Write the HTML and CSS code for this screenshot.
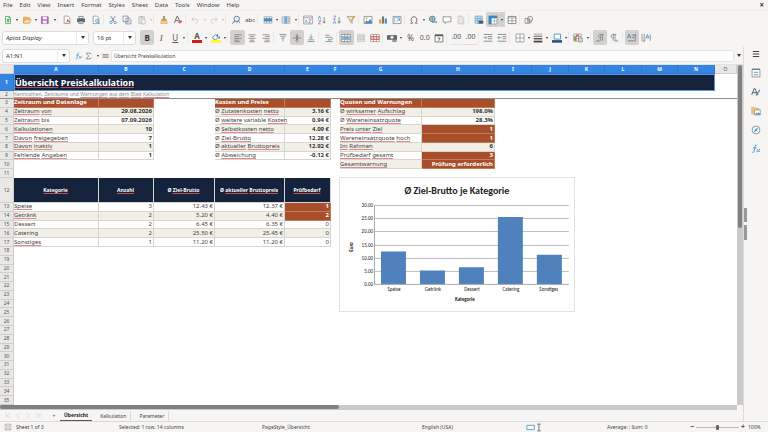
FILE: index.html
```html
<!DOCTYPE html>
<html lang="de">
<head>
<meta charset="utf-8">
<title>Übersicht Preiskalkulation</title>
<link rel="stylesheet" href="styles.css">
</head>
<body>
<svg class="sprite" aria-hidden="true">
  <symbol id="i-new" viewBox="0 0 14 14"><path d="M3.500 2h5l2 2v8h-7z" fill="#fff" stroke="#3f9a58"/><path d="M5 6.500h4.500M5 8.500h4.500M7 5v6" stroke="#34a853" stroke-width="1.200"/><path d="M8 1.500l3 3H8z" fill="#3f9a58"/></symbol>
  <symbol id="i-open" viewBox="0 0 14 14"><path d="M2 3h4l1 1h4v7H2z" fill="#e9b064" stroke="#d99a45"/><path d="M2 11.500l2-5h9l-2 5z" fill="#fbdca6" stroke="#d99a45" stroke-width=".8"/></symbol>
  <symbol id="i-save" viewBox="0 0 14 14"><path d="M2 2.500h9.500v9.500H2z" fill="#b86fc6" stroke="#9c4fae"/><path d="M4 2.500h5.500v3.500H4z" fill="#fff"/><path d="M4 8h5.500v4H4z" fill="#f4e4f7"/></symbol>
  <symbol id="i-pdf" viewBox="0 0 14 14"><path d="M3 1.500h5.500l2.500 2.500v8H3z" fill="#fff" stroke="#888"/><path d="M6 10.500c3-2 3-4 2-4s0 3 3.500 3.500" fill="none" stroke="#d84646" stroke-width="1.400"/></symbol>
  <symbol id="i-print" viewBox="0 0 14 14"><path d="M4 2h6v3H4z" fill="#fff" stroke="#666"/><path d="M1.500 5h11v5h-11z" fill="#59636b"/><path d="M4 8.500h6v3.500H4z" fill="#9dc7e4" stroke="#59636b" stroke-width=".7"/></symbol>
  <symbol id="i-preview" viewBox="0 0 14 14"><path d="M3 1.500h5.500l2.500 2.500v8H3z" fill="#fff" stroke="#888"/><circle cx="8.500" cy="8" r="2.200" fill="#d9effa" stroke="#3a8fc4"/><path d="M10 10l2 2.500" stroke="#3a8fc4"/></symbol>
  <symbol id="i-cut" viewBox="0 0 14 14"><path d="M4 1.500l5 8M10 1.500l-5 8" stroke="#666" fill="none"/><circle cx="4" cy="10.500" r="1.700" fill="none" stroke="#3a8fc4"/><circle cx="10" cy="10.500" r="1.700" fill="none" stroke="#3a8fc4"/></symbol>
  <symbol id="i-copy" viewBox="0 0 14 14"><path d="M1.500 1.500h7v8h-7zM5.500 4.500h4.500l2.500 2v6h-7z" fill="#f8fbfd" stroke="#778"/><path d="M7 8h4M7 10h4" stroke="#5aa5d3" stroke-width=".8"/></symbol>
  <symbol id="i-paste" viewBox="0 0 14 14"><path d="M2.500 2.500h8v9.500h-8z" fill="#e2e1df" stroke="#bbb"/><path d="M5 1.500h3v2H5z" fill="#aaa"/><path d="M6.500 6h5v6.500h-5z" fill="#f5f5f5" stroke="#bbb"/></symbol>
  <symbol id="i-clone" viewBox="0 0 14 14"><path d="M6 1.500h2v4H6z" fill="#777"/><path d="M3.500 5.500h7v2.500h-7z" fill="#d98b3a"/><path d="M3 8h8l.5 4h-9z" fill="#f4c98d" stroke="#c98b45" stroke-width=".6"/></symbol>
  <symbol id="i-clear" viewBox="0 0 14 14"><path d="M2 11L5.500 2h1L10 11M3.500 8h4.500" fill="none" stroke="#555" stroke-width="1.200"/><path d="M7 10l4-3 2 2-3.500 3z" fill="#e0565b"/></symbol>
  <symbol id="i-undo" viewBox="0 0 14 14"><path d="M5.500 3L2.500 6l3 3M3 6h6c3 0 3 5-1 6" fill="none" stroke="#c4c3c1" stroke-width="1.100"/></symbol>
  <symbol id="i-redo" viewBox="0 0 14 14"><path d="M8.500 3l3 3-3 3M11 6H5c-3 0-3 5 1 6" fill="none" stroke="#c4c3c1" stroke-width="1.100"/></symbol>
  <symbol id="i-find" viewBox="0 0 14 14"><circle cx="8" cy="5.500" r="3.800" fill="#e5f2fa" stroke="#555"/><path d="M5.500 8L2 12" stroke="#555" stroke-width="1.300"/><path d="M8 11.500l2-4 2.500 4" fill="none" stroke="#3a8fc4"/></symbol>
  <symbol id="i-row" viewBox="0 0 14 14"><path d="M1.500 2.500h11v9h-11zM1.500 9h11M5 2.500v9M9 2.500v9" fill="#fff" stroke="#888" stroke-width=".8"/><path d="M1.500 4.500h11v4h-11z" fill="#3a8fc4"/></symbol>
  <symbol id="i-col" viewBox="0 0 14 14"><path d="M1.500 2.500h11v9h-11zM1.500 5.500h11M1.500 8.500h11M10 2.500v9" fill="#fff" stroke="#888" stroke-width=".8"/><path d="M4.500 2h4v10h-4z" fill="#6ab0dc"/></symbol>
  <symbol id="i-sort" viewBox="0 0 14 14"><path d="M1 1.500h12v11H1zM1 4h12" fill="#fff" stroke="#777" stroke-width=".9"/><path d="M3 11l1.500-4L6 11" fill="none" stroke="#3a8fc4"/><path d="M8 6.500h3l-3 4.500h3" fill="none" stroke="#9b59b6"/></symbol>
  <symbol id="i-asc" viewBox="0 0 14 14"><path d="M1.500 6L3.500 1.500 5.500 6" fill="none" stroke="#3a8fc4"/><path d="M2 8h3.500L2 12.500h3.500" fill="none" stroke="#b05fb8"/><path d="M10 3v8M8 9l2 2.500L12 9" fill="none" stroke="#666"/></symbol>
  <symbol id="i-desc" viewBox="0 0 14 14"><path d="M1.500 12.500L3.500 8l2 4.500" fill="none" stroke="#3a8fc4"/><path d="M2 1.500h3.500L2 6h3.500" fill="none" stroke="#b05fb8"/><path d="M10 3v8M8 9l2 2.500L12 9" fill="none" stroke="#666"/></symbol>
  <symbol id="i-filter" viewBox="0 0 14 14"><path d="M1.500 2h11L8.500 7v5L5.500 9V7z" fill="#f9e7cb" stroke="#888"/><path d="M11 3L7 9" stroke="#e59c38" stroke-width="1.800"/></symbol>
  <symbol id="i-image" viewBox="0 0 14 14"><path d="M1.500 2h11v10h-11z" fill="#fff" stroke="#777"/><path d="M2 11.500l3-4 2 2 3-3.500 2.500 3v2.500z" fill="#3a8fc4"/><circle cx="5" cy="4.500" r="1.200" fill="#e8a33d"/></symbol>
  <symbol id="i-chart" viewBox="0 0 14 14"><path d="M1.500 6h3v6h-3z" fill="#e8a33d"/><path d="M5.500 2h3v10h-3z" fill="#777"/><path d="M9.500 5h3v7h-3z" fill="#3a8fc4"/></symbol>
  <symbol id="i-pivot" viewBox="0 0 14 14"><path d="M1.500 2h11v10h-11z" fill="#fff" stroke="#777"/><path d="M2 2.500h10v2H2zM2 2.500h2v9H2z" fill="#9ccbe8"/><path d="M6 9.500l4-3.500M8 5.500h2.500V8" fill="none" stroke="#2f86bd"/></symbol>
  <symbol id="i-omega" viewBox="0 0 14 14"><path d="M2 11.500h3.200C1.500 8 2.500 2.500 7 2.500S12.500 8 8.800 11.500H12" fill="none" stroke="#555" stroke-width="1.100"/></symbol>
  <symbol id="i-link" viewBox="0 0 14 14"><circle cx="6" cy="5.500" r="4" fill="#a9d0e8" stroke="#666"/><path d="M2 5.500h8M6 1.500v8" stroke="#666" stroke-width=".7"/><path d="M6 10h3M9.500 10h3" stroke="#3a8fc4" stroke-width="2"/></symbol>
  <symbol id="i-comment" viewBox="0 0 14 14"><path d="M1.500 2.500h11v7H7L4.500 12V9.500h-3z" fill="#fff" stroke="#777"/></symbol>
  <symbol id="i-header" viewBox="0 0 14 14"><path d="M3 1.500h5.500l2.500 2.500v8.500H3z" fill="#e6e5e3" stroke="#c2c1bf"/></symbol>
  <symbol id="i-area" viewBox="0 0 14 14"><path d="M1.500 1.500h10v10h-10zM1.500 5h10M1.500 8h10M5 1.500v10M8.500 1.500v10" fill="#d4eaf7" stroke="#4a94c1" stroke-width=".8"/><path d="M6.500 8h6.500v4H6.500z" fill="#555"/></symbol>
  <symbol id="i-freeze" viewBox="0 0 14 14"><path d="M1.500 1.500h11v11h-11z" fill="#fff" stroke="#888" stroke-width=".8"/><path d="M1 1h12v3.500H5v8.500H1z" fill="#3187c2"/><path d="M5 8.500h8M9 4v9" stroke="#999" stroke-width=".8"/></symbol>
  <symbol id="i-split" viewBox="0 0 14 14"><path d="M1.500 2h11v10h-11z" fill="#fff" stroke="#666"/><path d="M1.500 4h11M7 4v8M1.500 8h11" stroke="#666" stroke-width=".8"/></symbol>
  <symbol id="i-shapes" viewBox="0 0 14 14"><path d="M1.500 5h6v6.500h-6z" fill="none" stroke="#777"/><circle cx="8.500" cy="5.500" r="3.600" fill="none" stroke="#777"/><path d="M5 7h5v4H5z" fill="none" stroke="#777" stroke-width=".7"/></symbol>
  <symbol id="i-fill" viewBox="0 0 14 14"><path d="M2 6l4-4 4.500 4L6.500 9.500 4 9z" fill="#e8f3fa" stroke="#666"/><path d="M9 1.500v4M11.500 4.500v4" stroke="#3a8fc4" stroke-width="1.500"/><path d="M0 10h14v3.500H0z" fill="#ff0"/></symbol>
  <symbol id="i-left" viewBox="0 0 14 14"><path d="M2 2.500h10M2 5h6M2 7.500h10M2 10h6M2 12.200h8" stroke="#666" stroke-width=".9"/></symbol>
  <symbol id="i-center" viewBox="0 0 14 14"><path d="M2 2.500h10M4 5h6M2 7.500h10M4 10h6M3 12.200h8" stroke="#666" stroke-width=".9"/></symbol>
  <symbol id="i-right" viewBox="0 0 14 14"><path d="M2 2.500h10M6 5h6M2 7.500h10M6 10h6M4 12.200h8" stroke="#666" stroke-width=".9"/></symbol>
  <symbol id="i-top" viewBox="0 0 14 14"><path d="M2 2h10M3 4.500h8" stroke="#777"/><path d="M7 12V6.500M4.800 8.500L7 6.200l2.200 2.300" fill="none" stroke="#3a8fc4"/></symbol>
  <symbol id="i-middle" viewBox="0 0 14 14"><path d="M1 7h12" stroke="#666"/><path d="M7 1v12M5 3.500l2 2 2-2M5 10.500l2-2 2 2" fill="none" stroke="#666"/></symbol>
  <symbol id="i-bottom" viewBox="0 0 14 14"><path d="M2 12h10M3 9.500h8" stroke="#777"/><path d="M7 2v5.500M4.800 5.500L7 7.800l2.200-2.300" fill="none" stroke="#3a8fc4"/></symbol>
  <symbol id="i-wrap" viewBox="0 0 14 14"><path d="M2 3h6M2 6h9M2 12h10" stroke="#777"/><path d="M11 6c2 1 1 3.500-1 3.500H6M7.500 8L6 9.500 7.500 11" fill="none" stroke="#3a8fc4"/></symbol>
  <symbol id="i-merge" viewBox="0 0 14 14"><path d="M1 2h12v10H1zM1 5h12M1 9h12M5 2v3M9 2v3M5 9v3M9 9v3" fill="#fff" stroke="#666" stroke-width=".8"/><path d="M1.500 5h11v4h-11z" fill="#8fc6e8"/><path d="M3 7h8" stroke="#2a7db5"/></symbol>
  <symbol id="i-unmerge" viewBox="0 0 14 14"><path d="M2 2h10v10H2zM2 5h10M2 9h10" fill="#ddd" stroke="#bbb" stroke-width=".8"/></symbol>
  <symbol id="i-split-cells" viewBox="0 0 14 14"><path d="M1 2h12v10H1zM1 5h12M1 9h12M5 2v10M9 2v10" fill="#fff" stroke="#777" stroke-width=".8"/><path d="M1.500 5h11v4h-11zM5 5v4M9 5v4" fill="#f8d8d8" stroke="#d84646"/></symbol>
  <symbol id="i-money" viewBox="0 0 14 14"><path d="M0 3h14v6.500H0z" fill="#666"/><circle cx="7" cy="6" r="2.200" fill="#eee"/><path d="M8 9h5v3H8z" fill="#999" stroke="#555" stroke-width=".6"/></symbol>
  <symbol id="i-date" viewBox="0 0 14 14"><path d="M1.500 2.500h11v10h-11z" fill="#fff" stroke="#555"/><path d="M1.500 3.500h11" stroke="#555" stroke-width="2"/><path d="M5 7h3.500L6.500 11" fill="none" stroke="#444"/></symbol>
  <symbol id="i-indent" viewBox="0 0 14 14"><path d="M1 2h12M7 5h6M7 8h6M1 11.500h12" stroke="#666"/><path d="M.5 6.500H5M3.500 4.500l2 2-2 2" fill="none" stroke="#3a8fc4"/></symbol>
  <symbol id="i-outdent" viewBox="0 0 14 14"><path d="M1 2h12M8 5h5M8 8h5M1 11.500h12" stroke="#666"/><path d="M1 6.500h5.500M3 4.500l-2 2 2 2" fill="none" stroke="#3a8fc4"/></symbol>
  <symbol id="i-border" viewBox="0 0 14 14"><path d="M1.500 1.500h11v11h-11zM7 1.500v11M1.500 7h11" fill="#fff" stroke="#777" stroke-width=".9"/></symbol>
  <symbol id="i-style" viewBox="0 0 14 14"><path d="M1 1.500h12" stroke="#777" stroke-width=".8"/><path d="M1 4.500h12" stroke="#666" stroke-width="1.500"/><path d="M1 8h12" stroke="#555" stroke-width="2"/><path d="M1 12h12" stroke="#444" stroke-width="2.500"/></symbol>
  <symbol id="i-bcolor" viewBox="0 0 14 14"><path d="M3 1.500h9v7H3z" fill="#fff" stroke="#3a8fc4" stroke-width="1.200"/><path d="M0 10h14v3.500H0z" fill="#1f4e79"/></symbol>
  <symbol id="i-cond" viewBox="0 0 14 14"><path d="M1 1.500h10.500v10H1zM1 5h10.500M1 8h10.500M4.500 1.500v10M8 1.500v10" fill="#fff" stroke="#777" stroke-width=".8"/><path d="M4.500 2h3.500v3H4.500zM1.500 8h3v3h-3z" fill="#d9655a"/><path d="M1.500 5h3v3h-3z" fill="#67a866"/><path d="M8 7h5v5.500H8z" fill="#e9e2cf" stroke="#666" stroke-width=".8"/></symbol>
  <symbol id="i-ltr" viewBox="0 0 14 14"><path d="M12 2H7.500C4 2 4 7 7.500 7M8 2v9M10.500 2v9" fill="none" stroke="#777"/><path d="M1 11h5M4.500 9.500l1.500 1.500-1.500 1.500" fill="none" stroke="#3a8fc4"/></symbol>
  <symbol id="i-rtl" viewBox="0 0 14 14"><path d="M10 2H5.500C2 2 2 7 5.500 7M6 2v9M8.500 2v9" fill="none" stroke="#777"/><path d="M13 11H9M10.500 9.500L9 11l1.500 1.500" fill="none" stroke="#3a8fc4"/></symbol>
  <symbol id="i-horiz" viewBox="0 0 14 14"><path d="M.5 7.500l2.500-6 2.500 6M1.500 5.500h3" fill="none" stroke="#3a8fc4" stroke-width="1.100"/><path d="M7 3h3M7 6.500h3M1 11h9M11.500 2v10M10.500 3.500l1-1.500 1 1.500" fill="none" stroke="#666"/></symbol>
  <symbol id="i-vert" viewBox="0 0 14 14"><path d="M6.500 8l2.500-6 2.500 6M7.500 6h3" fill="none" stroke="#3a8fc4" stroke-width="1.100"/><path d="M1.500 1v11M4.500 1v11M3.500 10.500l1 1.500 1-1.500M13 2v9" fill="none" stroke="#777"/></symbol>
  <symbol id="i-fx" viewBox="0 0 14 14"><path d="M8 1.500C5.500 1 5.500 4 5 7s-.8 5.500-3 5M3 5.500h4.500M8 7.500c2-1 1.500 4 4.500 3M12.500 7.500c-2 0-2.500 3.500-5 3.500" fill="none" stroke="#2f8fd0" stroke-width="1.200"/></symbol>
  <symbol id="i-sum" viewBox="0 0 14 14"><path d="M11 4V2H3l4.500 5L3 12h8v-2" fill="none" stroke="#666" stroke-width="1.100"/></symbol>
  <symbol id="i-eq" viewBox="0 0 14 14"><path d="M1.500 5h11M1.500 9h11" stroke="#555" stroke-width="1.500"/></symbol>
  <symbol id="i-menu" viewBox="0 0 14 14"><path d="M2.500 3.500h9M2.500 7h9M2.500 10.500h9" stroke="#444" stroke-width="1.500"/></symbol>
  <symbol id="i-props" viewBox="0 0 14 14"><path d="M1.500 1.500h11v11h-11z" fill="#fff" stroke="#777"/><path d="M1.500 2h11" stroke="#777" stroke-width="1.600"/><path d="M4 6h6M4 9.500h6" stroke="#3a8fc4" stroke-width="1.200"/></symbol>
  <symbol id="i-styles" viewBox="0 0 14 14"><path d="M1 11L4.500 2h1L9 11M2.500 8h5" fill="none" stroke="#555" stroke-width="1.300"/><path d="M12.500 4L9 9" stroke="#777" stroke-width="1.500"/><path d="M9.500 8c-2 0-2 3-3.500 3.500 2 .8 4.500 0 4.500-2.500z" fill="#3a8fc4"/></symbol>
  <symbol id="i-gallery" viewBox="0 0 14 14"><path d="M1 2h4l1 1h5v8H1z" fill="#f3c37e" stroke="#dd9c44" stroke-width=".8"/><path d="M5 5.500h8v7H5z" fill="#fff" stroke="#777" stroke-width=".9"/><path d="M5.500 12l2.500-3 1.500 1.500L11 9l2 2v1z" fill="#3a8fc4"/></symbol>
  <symbol id="i-nav" viewBox="0 0 14 14"><circle cx="7" cy="7" r="5.500" fill="#eaf5fb" stroke="#777"/><path d="M10 4L8 8l-4 2 2-4z" fill="#3a8fc4"/></symbol>
  <symbol id="i-disk" viewBox="0 0 14 14"><path d="M2 2h10v10H2zM4.500 2v4h5V2M4.500 12V9h5v3" fill="none" stroke="#999"/></symbol>
  <symbol id="i-mode" viewBox="0 0 26 14"><path d="M1.500 3.500h12v7h-12z" fill="#fff" stroke="#4fa3c7" stroke-width="1.500"/><path d="M18 1.500h6M21 1.500v11M18 12.500h6" fill="none" stroke="#555" stroke-width="1.200"/></symbol>
  <symbol id="i-first" viewBox="0 0 14 14"><path d="M3 2v10M11 2L5 7l6 5" fill="none" stroke="#c6c5c3"/></symbol>
  <symbol id="i-prev" viewBox="0 0 14 14"><path d="M10 2L4 7l6 5" fill="none" stroke="#c6c5c3"/></symbol>
  <symbol id="i-next" viewBox="0 0 14 14"><path d="M4 2l6 5-6 5" fill="none" stroke="#c6c5c3"/></symbol>
  <symbol id="i-last" viewBox="0 0 14 14"><path d="M11 2v10M3 2l6 5-6 5" fill="none" stroke="#c6c5c3"/></symbol>
</svg>

<div class="app">
  <nav class="menubar">
    <a href="#">File</a><a href="#">Edit</a><a href="#">View</a><a href="#">Insert</a><a href="#">Format</a><a href="#">Styles</a><a href="#">Sheet</a><a href="#">Data</a><a href="#">Tools</a><a href="#">Window</a><a href="#">Help</a>
    <button class="close" aria-label="Close document">×</button>
  </nav>

  <div class="toolbar standard" role="toolbar" aria-label="Standard">
    <button class="tool" aria-label="New"><svg><use href="#i-new"/></svg></button><button class="caret" aria-label="New options"></button>
    <button class="tool" aria-label="Open"><svg><use href="#i-open"/></svg></button><button class="caret" aria-label="Open options"></button>
    <button class="tool" aria-label="Save"><svg><use href="#i-save"/></svg></button><button class="caret" aria-label="Save options"></button>
    <i class="sep"></i>
    <button class="tool" aria-label="Export as PDF"><svg><use href="#i-pdf"/></svg></button>
    <button class="tool" aria-label="Print"><svg><use href="#i-print"/></svg></button>
    <button class="tool" aria-label="Print preview"><svg><use href="#i-preview"/></svg></button>
    <i class="sep"></i>
    <button class="tool" aria-label="Cut"><svg><use href="#i-cut"/></svg></button>
    <button class="tool" aria-label="Copy"><svg><use href="#i-copy"/></svg></button>
    <button class="tool" aria-label="Paste"><svg><use href="#i-paste"/></svg></button><button class="caret off" aria-label="Paste options"></button>
    <i class="sep"></i>
    <button class="tool" aria-label="Clone formatting"><svg><use href="#i-clone"/></svg></button>
    <button class="tool" aria-label="Clear formatting"><svg><use href="#i-clear"/></svg></button>
    <i class="sep"></i>
    <button class="tool" aria-label="Undo"><svg><use href="#i-undo"/></svg></button><button class="caret off" aria-label="Undo options"></button>
    <button class="tool" aria-label="Redo"><svg><use href="#i-redo"/></svg></button><button class="caret off" aria-label="Redo options"></button>
    <i class="sep"></i>
    <button class="tool" aria-label="Find and replace"><svg><use href="#i-find"/></svg></button>
    <button class="tool spell" aria-label="Spelling">abc</button>
    <i class="sep"></i>
    <button class="tool" aria-label="Row"><svg><use href="#i-row"/></svg></button><button class="caret" aria-label="Row options"></button>
    <button class="tool" aria-label="Column"><svg><use href="#i-col"/></svg></button><button class="caret" aria-label="Column options"></button>
    <i class="sep"></i>
    <button class="tool" aria-label="Sort"><svg><use href="#i-sort"/></svg></button>
    <button class="tool" aria-label="Sort ascending"><svg><use href="#i-asc"/></svg></button>
    <button class="tool" aria-label="Sort descending"><svg><use href="#i-desc"/></svg></button>
    <button class="tool" aria-label="AutoFilter"><svg><use href="#i-filter"/></svg></button>
    <i class="sep"></i>
    <button class="tool" aria-label="Insert image"><svg><use href="#i-image"/></svg></button>
    <button class="tool" aria-label="Insert chart"><svg><use href="#i-chart"/></svg></button>
    <button class="tool" aria-label="Pivot table"><svg><use href="#i-pivot"/></svg></button>
    <i class="sep"></i>
    <button class="tool" aria-label="Special character"><svg><use href="#i-omega"/></svg></button><button class="caret" aria-label="Special character options"></button>
    <button class="tool" aria-label="Hyperlink"><svg><use href="#i-link"/></svg></button>
    <button class="tool" aria-label="Comment"><svg><use href="#i-comment"/></svg></button>
    <button class="tool" aria-label="Headers and footers"><svg><use href="#i-header"/></svg></button>
    <i class="sep"></i>
    <button class="tool" aria-label="Print area"><svg><use href="#i-area"/></svg></button>
    <button class="tool on" aria-label="Freeze rows and columns"><svg><use href="#i-freeze"/></svg></button><button class="caret on" aria-label="Freeze options"></button>
    <button class="tool" aria-label="Split window"><svg><use href="#i-split"/></svg></button>
    <i class="sep"></i>
    <button class="tool" aria-label="Draw functions"><svg><use href="#i-shapes"/></svg></button>
  </div>

  <div class="formatbar">
    <div class="combo font"><input type="text" value="Aptos Display" aria-label="Font name"><button class="caret" aria-label="Font list"></button></div>
    <div class="combo size"><input type="text" value="16 pt" aria-label="Font size"><button class="caret" aria-label="Size list"></button></div>
    <div class="toolbar" role="toolbar" aria-label="Formatting">
      <button class="tool on glyph bold" aria-label="Bold">B</button>
      <button class="tool glyph italic" aria-label="Italic">I</button>
      <button class="tool glyph under" aria-label="Underline">U</button><button class="caret" aria-label="Underline options"></button>
      <i class="sep"></i>
      <button class="tool glyph fontcolor" aria-label="Font color">A</button><button class="caret" aria-label="Font color options"></button>
      <button class="tool" aria-label="Background color"><svg><use href="#i-fill"/></svg></button><button class="caret" aria-label="Background color options"></button>
      <i class="sep"></i>
      <button class="tool on" aria-label="Align left"><svg><use href="#i-left"/></svg></button>
      <button class="tool" aria-label="Center"><svg><use href="#i-center"/></svg></button>
      <button class="tool" aria-label="Align right"><svg><use href="#i-right"/></svg></button>
      <i class="sep"></i>
      <button class="tool" aria-label="Align top"><svg><use href="#i-top"/></svg></button>
      <button class="tool on" aria-label="Center vertically"><svg><use href="#i-middle"/></svg></button>
      <button class="tool" aria-label="Align bottom"><svg><use href="#i-bottom"/></svg></button>
      <i class="sep"></i>
      <button class="tool" aria-label="Wrap text"><svg><use href="#i-wrap"/></svg></button>
      <i class="sep"></i>
      <button class="tool on" aria-label="Merge and center"><svg><use href="#i-merge"/></svg></button>
      <button class="tool" aria-label="Merge cells"><svg><use href="#i-unmerge"/></svg></button>
      <button class="tool" aria-label="Unmerge cells"><svg><use href="#i-split-cells"/></svg></button>
      <i class="sep"></i>
      <button class="tool" aria-label="Currency"><svg><use href="#i-money"/></svg></button><button class="caret" aria-label="Currency options"></button>
      <button class="tool glyph" aria-label="Percent">%</button>
      <button class="tool glyph num" aria-label="Number">0.0</button>
      <button class="tool" aria-label="Date"><svg><use href="#i-date"/></svg></button>
      <i class="sep"></i>
      <button class="tool glyph num add" aria-label="Add decimal place">.00</button>
      <button class="tool glyph num del" aria-label="Delete decimal place">.00</button>
      <i class="sep"></i>
      <button class="tool" aria-label="Increase indent"><svg><use href="#i-indent"/></svg></button>
      <button class="tool" aria-label="Decrease indent"><svg><use href="#i-outdent"/></svg></button>
      <i class="sep"></i>
      <button class="tool" aria-label="Borders"><svg><use href="#i-border"/></svg></button><button class="caret" aria-label="Borders options"></button>
      <button class="tool" aria-label="Border style"><svg><use href="#i-style"/></svg></button><button class="caret" aria-label="Border style options"></button>
      <button class="tool" aria-label="Border color"><svg><use href="#i-bcolor"/></svg></button><button class="caret" aria-label="Border color options"></button>
      <i class="sep"></i>
      <button class="tool" aria-label="Conditional formatting"><svg><use href="#i-cond"/></svg></button><button class="caret" aria-label="Conditional formatting options"></button>
      <i class="sep"></i>
      <button class="tool on" aria-label="Left to right"><svg><use href="#i-ltr"/></svg></button>
      <button class="tool" aria-label="Right to left"><svg><use href="#i-rtl"/></svg></button>
      <i class="sep"></i>
      <button class="tool on" aria-label="Horizontal text"><svg><use href="#i-horiz"/></svg></button>
      <button class="tool" aria-label="Vertical text"><svg><use href="#i-vert"/></svg></button>
    </div>
  </div>

  <div class="body">
    <main class="work">
      <div class="formulabar">
        <div class="combo name"><input type="text" value="A1:N1" aria-label="Name box"><button class="caret" aria-label="Cell ranges"></button></div>
        <button class="fn" aria-label="Function wizard"><svg><use href="#i-fx"/></svg></button>
        <button class="fn" aria-label="Select function"><svg><use href="#i-sum"/></svg></button><button class="caret" aria-label="Function list"></button>
        <button class="fn" aria-label="Formula"><svg><use href="#i-eq"/></svg></button>
        <input class="formula" type="text" value="Übersicht Preiskalkulation" aria-label="Input line">
        <button class="caret expand" aria-label="Expand formula bar"></button>
      </div>

      <div class="pane">
        <div class="canvas">
          <table class="sheet">
            <thead>
              <tr><th class="corner"></th><th class="sel">A</th><th class="sel">B</th><th class="sel">C</th><th class="sel">D</th><th class="sel">E</th><th class="sel">F</th><th class="sel">G</th><th class="sel">H</th><th class="sel">I</th><th class="sel">J</th><th class="sel">K</th><th class="sel">L</th><th class="sel">M</th><th class="sel">N</th><th>O</th></tr>
            </thead>
            <tbody>
              <tr><th class="sel">1</th><td class="title"><u>Übersicht</u> <u>Preiskalkulation</u></td></tr>
              <tr class="frozen"><th>2</th><td class="subtitle"><u>Kennzahlen</u>, <u>Zeiträume</u> und <u>Warnungen</u> <u>aus</u> <u>dem</u> <u>Blatt</u> <u>Kalkulation</u></td></tr>
              <tr class="group"><th>3</th><td><u>Zeitraum</u> und <u>Datenlage</u></td><td></td><td class="d">Kosten und Preise</td><td></td><td class="g"><u>Quoten</u> und <u>Warnungen</u></td><td></td></tr>
              <tr class="kpi odd"><th>4</th><td><u>Zeitraum</u> <u>von</u></td><td>29.08.2026</td><td class="d">Ø <u>Zutatenkosten</u> <u>netto</u></td><td>3.16 €</td><td class="g">Ø <u>wirksamer</u> <u>Aufschlag</u></td><td>198.0%</td></tr>
              <tr class="kpi"><th>5</th><td><u>Zeitraum</u> bis</td><td>07.09.2026</td><td class="d">Ø <u>weitere</u> variable <u>Kosten</u></td><td>0.94 €</td><td class="g">Ø <u>Wareneinsatzquote</u></td><td>28.3%</td></tr>
              <tr class="kpi odd"><th>6</th><td><u>Kalkulationen</u></td><td>10</td><td class="d">Ø <u>Selbstkosten</u> <u>netto</u></td><td>4.09 €</td><td class="g"><u>Preis</u> <u>unter</u> <u>Ziel</u></td><td class="warn">1</td></tr>
              <tr class="kpi"><th>7</th><td><u>Davon</u> <u>freigegeben</u></td><td>7</td><td class="d">Ø <u>Ziel-Brutto</u></td><td>12.28 €</td><td class="g"><u>Wareneinsatzquote</u> <u>hoch</u></td><td class="warn">1</td></tr>
              <tr class="kpi odd"><th>8</th><td><u>Davon</u> <u>inaktiv</u></td><td>1</td><td class="d">Ø <u>aktueller</u> <u>Bruttopreis</u></td><td>12.92 €</td><td class="g"><u>Im</u> <u>Rahmen</u></td><td>6</td></tr>
              <tr class="kpi"><th>9</th><td><u>Fehlende</u> <u>Angaben</u></td><td>1</td><td class="d">Ø <u>Abweichung</u></td><td>-0.12 €</td><td class="g"><u>Prüfbedarf</u> <u>gesamt</u></td><td class="warn">3</td></tr>
              <tr class="kpi odd"><th>10</th><td class="g"><u>Gesamtwarnung</u></td><td class="warn">Prüfung erforderlich</td></tr>
              <tr><th>11</th></tr>
              <tr class="heads"><th>12</th><td><u>Kategorie</u></td><td><u>Anzahl</u></td><td>Ø <u>Ziel-Brutto</u></td><td>Ø <u>aktueller</u> <u>Bruttopreis</u></td><td><u>Prüfbedarf</u></td></tr>
              <tr class="data"><th>13</th><td><u>Speise</u></td><td>3</td><td>12.43 €</td><td>12.37 €</td><td class="warn">1</td></tr>
              <tr class="data odd"><th>14</th><td><u>Getränk</u></td><td>2</td><td>5.20 €</td><td>4.40 €</td><td class="warn">2</td></tr>
              <tr class="data"><th>15</th><td>Dessert</td><td>2</td><td>6.45 €</td><td>6.35 €</td><td>0</td></tr>
              <tr class="data odd"><th>16</th><td>Catering</td><td>2</td><td>25.50 €</td><td>25.45 €</td><td>0</td></tr>
              <tr class="data"><th>17</th><td><u>Sonstiges</u></td><td>1</td><td>11.20 €</td><td>11.20 €</td><td>0</td></tr>
              <tr><th>18</th></tr><tr><th>19</th></tr><tr><th>20</th></tr><tr><th>21</th></tr><tr><th>22</th></tr><tr><th>23</th></tr>
              <tr><th>24</th></tr><tr><th>25</th></tr><tr><th>26</th></tr><tr><th>27</th></tr><tr><th>28</th></tr><tr><th>29</th></tr>
              <tr><th>30</th></tr><tr><th>31</th></tr><tr><th>32</th></tr><tr><th>33</th></tr><tr><th>34</th></tr><tr><th>35</th></tr>
            </tbody>
          </table>
          <svg class="chart" viewBox="0 0 234 133" role="img" aria-label="Ø Ziel-Brutto je Kategorie">
            <path class="grid" d="M34 27.500H229M34 40.500H229M34 53.500H229M34 67.500H229M34 80.500H229M34 93.500H229"/>
            <path class="bars" d="M41 73.600h25v32.900H41zM80 92.700h25v13.800H80zM119 89.400h25v17.100h-25zM158 39h25v67.500h-25zM197 76.900h25v29.600h-25z"/>
            <path class="axis" d="M34.500 27V106.500H229"/>
            <text class="ctitle" x="117" y="16">Ø Ziel-Brutto je Kategorie</text>
            <g class="ylab"><text x="33" y="29">30.00</text><text x="33" y="42">25.00</text><text x="33" y="55">20.00</text><text x="33" y="69">15.00</text><text x="33" y="82">10.00</text><text x="33" y="95">5.00</text><text x="33" y="108">0.00</text></g>
            <g class="xlab"><text x="54" y="113">Speise</text><text x="93" y="113">Getränk</text><text x="132" y="113">Dessert</text><text x="171" y="113">Catering</text><text x="209" y="113">Sonstiges</text></g>
            <text class="atitle" x="125" y="123">Kategorie</text>
            <text class="atitle" transform="translate(13 69) rotate(-90)">Euro</text>
          </svg>
        </div>
        <div class="vscroll"><i></i></div>
        <div class="hscroll"><i></i></div>
      </div>

      <div class="tabs">
        <div class="steps">
          <button aria-label="First sheet"><svg><use href="#i-first"/></svg></button><button aria-label="Previous sheet"><svg><use href="#i-prev"/></svg></button><button aria-label="Next sheet"><svg><use href="#i-next"/></svg></button><button aria-label="Last sheet"><svg><use href="#i-last"/></svg></button>
        </div>
        <button class="plus" aria-label="Add sheet">+</button>
        <a class="tab current" href="#">Übersicht</a><a class="tab" href="#">Kalkulation</a><a class="tab" href="#">Parameter</a>
      </div>
    </main>

    <aside class="sidebar">
      <button class="handle" aria-label="Hide sidebar"></button>
      <button class="deck" aria-label="Sidebar settings"><svg><use href="#i-menu"/></svg></button>
      <button class="deck" aria-label="Properties"><svg><use href="#i-props"/></svg></button>
      <button class="deck" aria-label="Styles"><svg><use href="#i-styles"/></svg></button>
      <button class="deck" aria-label="Gallery"><svg><use href="#i-gallery"/></svg></button>
      <button class="deck" aria-label="Navigator"><svg><use href="#i-nav"/></svg></button>
      <button class="deck" aria-label="Functions"><svg><use href="#i-fx"/></svg></button>
    </aside>
  </div>

  <footer class="status">
    <span class="doc"><svg><use href="#i-disk"/></svg>Sheet 1 of 3</span>
    <span>Selected: 1 row, 14 columns</span>
    <span>PageStyle_Übersicht</span>
    <span>English (USA)</span>
    <span class="mode"><svg><use href="#i-mode"/></svg></span>
    <span>Average: ; Sum: 0</span>
    <span class="zoom"><button aria-label="Zoom out">−</button><input type="range" min="0" max="100" value="50" aria-label="Zoom"><button aria-label="Zoom in">+</button></span>
    <span class="pct">100%</span>
  </footer>
</div>
</body>
</html>
```
FILE: styles.css
```css
* { box-sizing: border-box; }
body {
  margin: 0;
  color: #444;
  background: #f6f5f3;
  font: 5px/8px "Noto Sans", "Open Sans", sans-serif;
}
button, input { margin: 0; padding: 0; border: 0; background: none; color: inherit; font: inherit; min-width: 0; }
a { color: inherit; text-decoration: none; }
svg { display: block; }
.sprite { position: absolute; width: 0; height: 0; }

.app { display: flex; flex-direction: column; height: 100vh; overflow: hidden; }

.menubar { display: flex; align-items: center; gap: 7px; height: 11px; padding: 0 4px 0 3px; border-bottom: 1px solid #efeeec; font-size: 6px; }
.menubar .close { margin-left: auto; font-size: 8px; font-weight: 700; color: #333; }

.toolbar { display: flex; align-items: center; }
.toolbar.standard { width: 70%; height: 17px; padding: 0 1px; }
.tool { display: flex; flex: 29 1 0; align-items: center; justify-content: center; height: 15px; border-radius: 2px; }
.tool svg { width: 10px; height: 10px; }
.sep { flex: 5 1 0; height: 11px; border-left: 1px solid #e9e8e6; }
.caret { display: flex; flex: 9 1 0; align-items: center; justify-content: center; height: 15px; }
.caret::before { content: ""; border: 1px solid transparent; border-top: 2px solid #333; border-bottom: 0; }
.caret.off::before { border-top-color: #bbb; }
.on { background: #d3d1cd; }
.spell { font-size: 6px; }
.glyph { font-size: 8px; line-height: 8px; color: #555; }
.bold { font-weight: 700; color: #333; }
.italic { font-family: "Liberation Serif", serif; font-style: italic; font-size: 9px; }
.under { text-decoration: underline; }
.fontcolor { position: relative; padding-bottom: 3px; font-weight: 700; }
.fontcolor::after { content: ""; position: absolute; left: 2px; right: 2px; bottom: 2px; height: 3px; background: #c9211e; }
.num { font-size: 7px; }
.add { border-bottom: 1px solid #d6e6ef; }
.del { border-bottom: 1px solid #efd2d6; }

.formatbar { display: flex; align-items: center; gap: 4px; height: 19px; padding-left: 2px; }
.formatbar .toolbar { flex: 0 0 67%; }
.combo { display: flex; align-items: center; min-width: 0; height: 14px; border: 1px solid #dedcd9; border-radius: 3px; background: #fff; }
.combo input { flex: 1 1 0; width: 0; padding-left: 3px; color: #333; font-size: 6px; }
.combo .caret { flex: 0 0 12px; height: 12px; border-left: 1px solid #eceae7; }
.combo .caret::before, .formulabar .expand::before { border-width: 3px 2px 0; }
.combo.font { flex: 0 0 87px; }
.combo.font input { font-style: italic; }
.combo.size { flex: 0 0 43px; }

.body { display: flex; flex: 1 1 0; min-height: 0; }
.work { display: flex; flex: 1 1 0; flex-direction: column; min-width: 0; border-right: 1px solid #dddbd8; }

.formulabar { display: flex; align-items: center; height: 18px; padding-left: 2px; border-bottom: 1px solid #e3e2e0; }
.combo.name { flex: 0 0 68px; margin-right: 4px; }
.fn { flex: 0 0 10px; }
.fn svg { width: 9px; height: 8px; }
.formulabar > .caret { flex: 0 0 7px; }
.formula { flex: 1 1 0; height: 12px; padding-left: 2px; border: 1px solid #e6e4e1; border-radius: 2px; background: #fff; }
.formulabar > .expand { flex: 0 0 9px; }

.pane { display: grid; flex: 1 1 0; grid-template: minmax(0, 1fr) 5px / minmax(0, 1fr) 6px; min-height: 0; }
.canvas { position: relative; overflow: hidden; background: #fff; }
.sheet {
  display: grid;
  height: 100%;
  grid-template-columns: 14px 85fr 55fr 61fr 70fr 46fr 9fr 82fr 73fr 37fr 37fr 36fr 37fr 36fr 37fr 22fr;
  grid-template-rows: 9px 17px 8px repeat(9, minmax(0, 1fr)) 25px repeat(23, minmax(0, 1fr));
}
.sheet thead, .sheet tbody, .sheet tr { display: contents; }
.sheet th, .sheet td { display: block; align-content: center; min-width: 0; padding: 0; white-space: nowrap; line-height: 7px; }
.sheet th { grid-column-start: 1; border: solid #cfcecb; border-width: 0 1px 1px 0; background: #e9e8e6; color: #555; font-weight: 400; text-align: center; }
.sheet thead th { grid-column-start: auto; }
.sheet th.sel { border-color: #2f78d2; background: #3584e4; color: #fff; font-weight: 700; }
.sheet td { padding: 0 1px 0 0; border: solid #d6d5d0; border-width: 0 1px 1px 0; font-size: 6px; text-align: left; }
.sheet u { text-decoration: underline 1px #e08a8f; text-underline-offset: 1px; text-decoration-skip-ink: none; }
.sheet td.title { grid-column: 2 / 16; border: 1px solid #5b95d8; background: #14223b; color: #fff; font-size: 9px; font-weight: 700; line-height: 12px; }
.sheet .title u { text-decoration-color: #c04a50; }
.sheet .frozen th { border-bottom-color: #8c8c8c; }
.sheet td.subtitle { grid-column: 2 / 17; border: 0; border-bottom: 1px solid #8c8c8c; color: #8a8a8a; font-size: 5px; }
.sheet td.d { grid-column-start: 5; }
.sheet td.g { grid-column-start: 8; }
.sheet .group td { background: #a94e2a; border-color: #c07a5d; color: #fff; font-weight: 700; }
.sheet .odd td { background: #f2f0e6; }
.sheet .kpi td:nth-child(odd) { color: #333; font-weight: 700; text-align: right; }
.sheet .data td + td { text-align: right; }
.sheet tr td.warn, .sheet .kpi td.warn:nth-child(odd) { border-color: #c07a5d; background: #a94e2a; color: #fff; font-weight: 700; text-align: right; }
.sheet .heads td { background: #14223b; color: #fff; font-size: 5px; font-weight: 700; text-align: center; }
.sheet .group u, .sheet .heads u { text-decoration-color: #c8504c; }

.chart { position: absolute; left: 46%; top: 33%; width: 32%; border: 1px solid #e2e2e2; background: #fff; font-family: Carlito, Lato, sans-serif; fill: #222; }
.grid { stroke: #bdbdbd; }
.axis { fill: none; stroke: #aaa; }
.bars { fill: #4f81bd; }
.ctitle { font-size: 10px; font-weight: 700; text-anchor: middle; }
.ylab { font-size: 5px; text-anchor: end; }
.xlab { font-size: 5px; text-anchor: middle; }
.atitle { font-size: 5px; font-weight: 700; text-anchor: middle; }

.vscroll { padding-left: 1px; background: #cacaca; }
.vscroll i { display: block; width: 4px; height: 48%; border-radius: 2px; background: #808080; }
.hscroll { background: #cacaca; }
.hscroll i { display: block; width: 46%; height: 4px; border-radius: 2px; background: #808080; }

.tabs { display: flex; align-items: center; height: 11px; padding-left: 4px; }
.steps { display: flex; width: 44px; }
.steps button { width: 10px; }
.steps svg { width: 8px; height: 7px; }
.plus { width: 12px; color: #3a6ea5; font-weight: 700; }
.tab { margin-right: 4px; padding: 1px 4px; border-right: 1px solid #dddbd8; }
.tab.current { border: 0; border-bottom: 1px solid #555; color: #222; font-weight: 700; }

.sidebar { position: relative; display: flex; flex: 0 0 24px; flex-direction: column; align-items: center; gap: 9px; padding-top: 2px; }
.deck { width: 12px; height: 10px; }
.deck svg { width: 12px; height: 10px; }
.handle { position: absolute; left: 0; top: 43%; width: 3px; height: 32px; background: linear-gradient(#999 45%, transparent 45% 53%, #999 53%); }

.status { display: grid; grid-template-columns: 115fr 143fr 160fr 104fr 81fr 85fr 59fr 21fr; align-items: center; height: 11px; border-top: 1px solid #dddbd8; }
.status span { min-width: 0; padding-left: 4px; white-space: nowrap; }
.status .doc { display: flex; align-items: center; gap: 4px; }
.doc svg { width: 8px; height: 8px; }
.mode svg { width: 16px; height: 9px; }
.status .zoom { display: flex; align-items: center; padding-left: 0; }
.zoom button { width: 8px; font-size: 7px; font-weight: 700; }
.zoom input { flex: 1 1 0; width: 0; appearance: none; height: 8px; background: linear-gradient(transparent 45%, #bbb 45% 58%, transparent 58%); }
.zoom input::-webkit-slider-thumb { appearance: none; width: 3px; height: 5px; border-radius: 1px; background: #666; }
.status .pct { padding-left: 1px; }
```
